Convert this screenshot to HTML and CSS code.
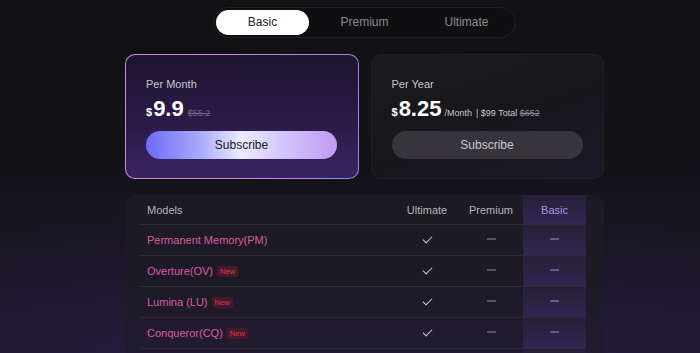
FILE: index.html
```html
<!DOCTYPE html>
<html lang="en">
  <head>
    <meta charset="UTF-8" />
    <meta name="viewport" content="width=device-width, initial-scale=1.0" />
    <title>Pricing</title>
    <link rel="stylesheet" href="styles.css">
  </head>
  <body>
    <div class="page">
      <div class="tabs">
        <div class="tab active">Basic</div>
        <div class="tab">Premium</div>
        <div class="tab">Ultimate</div>
      </div>

      <div class="plans">
        <div class="plan selected">
          <div class="plan-label">Per Month</div>
          <div class="price">
            <span class="currency">$</span><span class="amount">9.9</span>
            <span class="old">$55.2</span>
          </div>
          <button class="subscribe">Subscribe</button>
        </div>

        <div class="plan">
          <div class="plan-label">Per Year</div>
          <div class="price">
            <span class="currency">$</span><span class="amount">8.25</span>
            <span class="unit">/Month</span>
            <span class="total">| $99 Total <s>$652</s></span>
          </div>
          <button class="subscribe dark">Subscribe</button>
        </div>
      </div>

      <div class="compare">
        <div class="row head">
          <div class="cell name">Models</div>
          <div class="cell">Ultimate</div>
          <div class="cell">Premium</div>
          <div class="cell basic">Basic</div>
        </div>
        <div class="row">
          <div class="cell name model">Permanent Memory(PM)</div>
          <div class="cell"><span class="check"></span></div>
          <div class="cell"><span class="dash"></span></div>
          <div class="cell basic"><span class="dash"></span></div>
        </div>
        <div class="row">
          <div class="cell name model">Overture(OV) <span class="badge">New</span></div>
          <div class="cell"><span class="check"></span></div>
          <div class="cell"><span class="dash"></span></div>
          <div class="cell basic"><span class="dash"></span></div>
        </div>
        <div class="row">
          <div class="cell name model">Lumina (LU) <span class="badge">New</span></div>
          <div class="cell"><span class="check"></span></div>
          <div class="cell"><span class="dash"></span></div>
          <div class="cell basic"><span class="dash"></span></div>
        </div>
        <div class="row">
          <div class="cell name model">Conqueror(CQ) <span class="badge">New</span></div>
          <div class="cell"><span class="check"></span></div>
          <div class="cell"><span class="dash"></span></div>
          <div class="cell basic"><span class="dash"></span></div>
        </div>
        <div class="row">
          <div class="cell name model">&nbsp;</div>
          <div class="cell"></div>
          <div class="cell"></div>
          <div class="cell basic"></div>
        </div>
      </div>
    </div>
  </body>
</html>
```

FILE: styles.css
```css
* {
  margin: 0;
  padding: 0;
  box-sizing: border-box;
  font-family: "Liberation Sans", Arial, sans-serif;
}

html,
body {
  height: 100%;
  overflow: hidden;
}

body {
  background-color: #111013;
  background-image:
    radial-gradient(ellipse 75% 65% at 50% 115%, rgba(66, 42, 112, 0.5), rgba(40, 28, 70, 0.25) 60%, rgba(0, 0, 0, 0) 100%),
    linear-gradient(180deg, #111013 0%, #131217 45%, #211a33 100%);
}

.page {
  width: 479px;
  margin-left: 125px;
  padding-top: 7px;
  display: flex;
  flex-direction: column;
  align-items: center;
}

.tabs {
  display: flex;
  gap: 9px;
  padding: 2px 2px;
  border: 1px solid #1f1e22;
  border-radius: 16px;
  background-color: #0f0f11;
}

.tab {
  width: 93px;
  height: 25px;
  line-height: 25px;
  text-align: center;
  font-size: 12px;
  color: #8c8a90;
  border-radius: 13px;
}

.tab.active {
  background-color: #ffffff;
  color: #222;
}

.plans {
  display: flex;
  gap: 12px;
  width: 100%;
  margin-top: 16px;
}

.plan {
  flex: 1;
  height: 125px;
  padding: 23px 20px 0 20px;
  border-radius: 10px;
  border: 1px solid #222026;
  background: linear-gradient(160deg, #1b1a1f 0%, #17161b 55%, #1b1828 100%);
}

.plan.selected {
  border: 1.5px solid transparent;
  background:
    linear-gradient(180deg, #1d1430 0%, #2b1b47 55%, #3a2460 100%) padding-box,
    linear-gradient(90deg, #d88acb 0%, #b58ee6 60%, #9d7ff0 100%) border-box;
}

.plan-label {
  font-size: 11px;
  color: #c9c4d1;
  line-height: 13px;
}

.price {
  display: flex;
  align-items: baseline;
  margin-top: 5px;
  height: 28px;
  color: #fff;
  white-space: nowrap;
}

.currency {
  font-size: 11px;
  font-weight: bold;
  margin-right: 1px;
}

.amount {
  font-size: 22px;
  font-weight: bold;
}

.old {
  font-size: 9px;
  color: #6f6680;
  text-decoration: line-through;
  margin-left: 4px;
}

.unit {
  font-size: 9px;
  color: #c9c6cf;
  margin-left: 3px;
}

.total {
  font-size: 9px;
  color: #c9c6cf;
  margin-left: 4px;
}

.total s {
  color: #8f8b96;
}

.subscribe {
  display: block;
  width: 191px;
  height: 28px;
  margin-top: 7px;
  border: none;
  border-radius: 14px;
  font-size: 12px;
  color: #1c1a2a;
  background: linear-gradient(90deg, #6b6cf7 0%, #a9a8fb 28%, #ecebff 50%, #d3c5fc 72%, #c19af3 100%);
  cursor: pointer;
}

.subscribe.dark {
  background-color: #37353b;
  background-image: none;
  color: #c9c6cc;
}

.compare {
  width: 100%;
  margin-top: 16px;
  padding: 0 18px 0 15px;
  border-radius: 10px;
  background: linear-gradient(180deg, #1c1a21 0%, #1d1a27 50%, #221c34 100%);
}

.row {
  display: grid;
  grid-template-columns: 1fr 64px 64px 63px;
  height: 31px;
  border-bottom: 1px solid #2d2938;
}

.row.head {
  height: 30px;
}

.cell {
  display: flex;
  align-items: center;
  justify-content: center;
  font-size: 11px;
  color: #b7b3bd;
}

.cell.name {
  justify-content: flex-start;
  padding-left: 7px;
}

.cell.basic {
  background: linear-gradient(180deg, #272037 0%, #2c2347 60%, #322652 100%);
  color: #a895e2;
}

.model {
  color: #de5aa0;
}

.badge {
  display: inline-block;
  margin-left: 4px;
  padding: 1px 3px;
  font-size: 7.5px;
  line-height: 9px;
  color: #d03f52;
  background-color: #48192b;
  border-radius: 2px;
}

.check {
  display: block;
  width: 9px;
  height: 5px;
  border-left: 1.5px solid #cfcbd6;
  border-bottom: 1.5px solid #cfcbd6;
  transform: rotate(-45deg);
  margin-top: -4px;
}

.dash {
  display: block;
  width: 9px;
  height: 2px;
  background-color: #57535f;
  margin-top: -2px;
}

.cell.basic .dash {
  background-color: #65598a;
}
```
